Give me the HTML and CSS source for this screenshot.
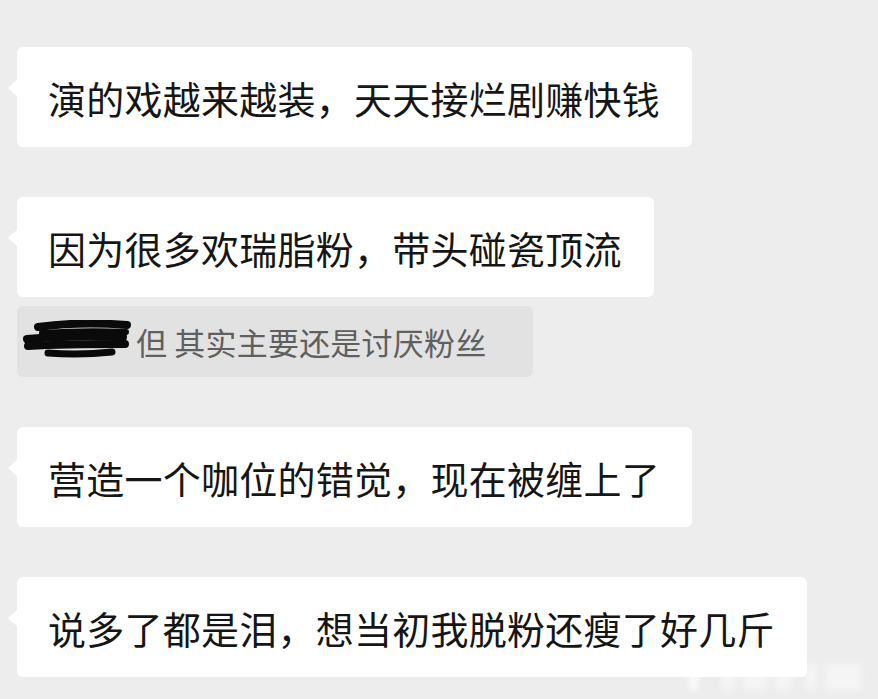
FILE: index.html
```html
<!DOCTYPE html>
<html lang="zh-CN">
<head>
<meta charset="utf-8">
<title>聊天记录</title>
<link rel="stylesheet" href="styles.css">
</head>
<body>
<div class="chat">
  <div class="bubble">演的戏越来越装，天天接烂剧赚快钱</div>
  <div class="bubble gap-small">因为很多欢瑞脂粉，带头碰瓷顶流</div>
  <div class="quote">
    <svg class="scribble" width="110" height="44" viewBox="0 0 110 44" aria-hidden="true">
      <g fill="none" stroke="#0a0a0a" stroke-linecap="round">
        <path d="M16 7 C45 3 80 3 105 5" stroke-width="8"/>
        <path d="M20 13 C50 11 80 11 104 12" stroke-width="6"/>
        <path d="M5 19 C35 16 70 16 101 17" stroke-width="8"/>
        <path d="M6 26 C40 24 75 24 103 24" stroke-width="8"/>
        <path d="M26 33 C50 35 72 34 90 32" stroke-width="7"/>
      </g>
    </svg>
    <span class="quote-text">但 其实主要还是讨厌粉丝</span>
  </div>
  <div class="bubble">营造一个咖位的错觉，现在被缠上了</div>
  <div class="bubble">说多了都是泪，想当初我脱粉还瘦了好几斤</div>
</div>
<div class="watermark" aria-hidden="true">
  <span class="wm wm-a"></span>
  <span class="wm wm-b"></span>
  <span class="wm wm-c"></span>
  <span class="wm wm-d"></span>
  <span class="wm wm-e"></span>
  <span class="wm wm-f"></span>
</div>
</body>
</html>
```

FILE: styles.css
```css
html, body {
  margin: 0;
  padding: 0;
}
body {
  background: #ededed;
  width: 878px;
  height: 699px;
  overflow: hidden;
  position: relative;
  font-family: "Noto Sans CJK SC", "Noto Sans", sans-serif;
}
.chat {
  display: flex;
  flex-direction: column;
  align-items: flex-start;
  padding: 47px 0 0 17px;
  gap: 50px;
}
.bubble {
  position: relative;
  background: #ffffff;
  border-radius: 6px;
  height: 100px;
  box-sizing: border-box;
  display: flex;
  align-items: center;
  padding: 0 32px 0 31px;
  font-size: 38px;
  letter-spacing: 0.25px;
  color: #161616;
  white-space: nowrap;
}
.bubble::before {
  content: "";
  position: absolute;
  left: -9px;
  top: 32px;
  border-style: solid;
  border-width: 9px 10px 9px 0;
  border-color: transparent #ffffff transparent transparent;
}
.gap-small {
  margin-bottom: -41px;
}
.quote {
  display: flex;
  align-items: center;
  gap: 4px;
  background: #e2e2e2;
  border-radius: 6px;
  height: 71px;
  box-sizing: border-box;
  padding: 0 47px 0 5px;
  margin-bottom: 0;
}
.scribble {
  display: block;
  flex: none;
}
.quote-text {
  font-size: 31px;
  letter-spacing: 0.2px;
  color: #5f5f5f;
  white-space: pre;
}
.watermark {
  position: absolute;
  left: 690px;
  top: 664px;
  width: 172px;
  height: 26px;
  display: flex;
  gap: 8px;
  align-items: stretch;
  filter: blur(3px);
}
.wm {
  display: block;
  background: rgba(255, 255, 255, 0.45);
}
.wm-a { width: 8px; background: rgba(255,255,255,0.9); }
.wm-b { width: 14px; margin-left: 16px; }
.wm-c { width: 26px; }
.wm-d { width: 18px; }
.wm-e { width: 12px; margin-left: 6px; }
.wm-f { width: 40px; }
```
